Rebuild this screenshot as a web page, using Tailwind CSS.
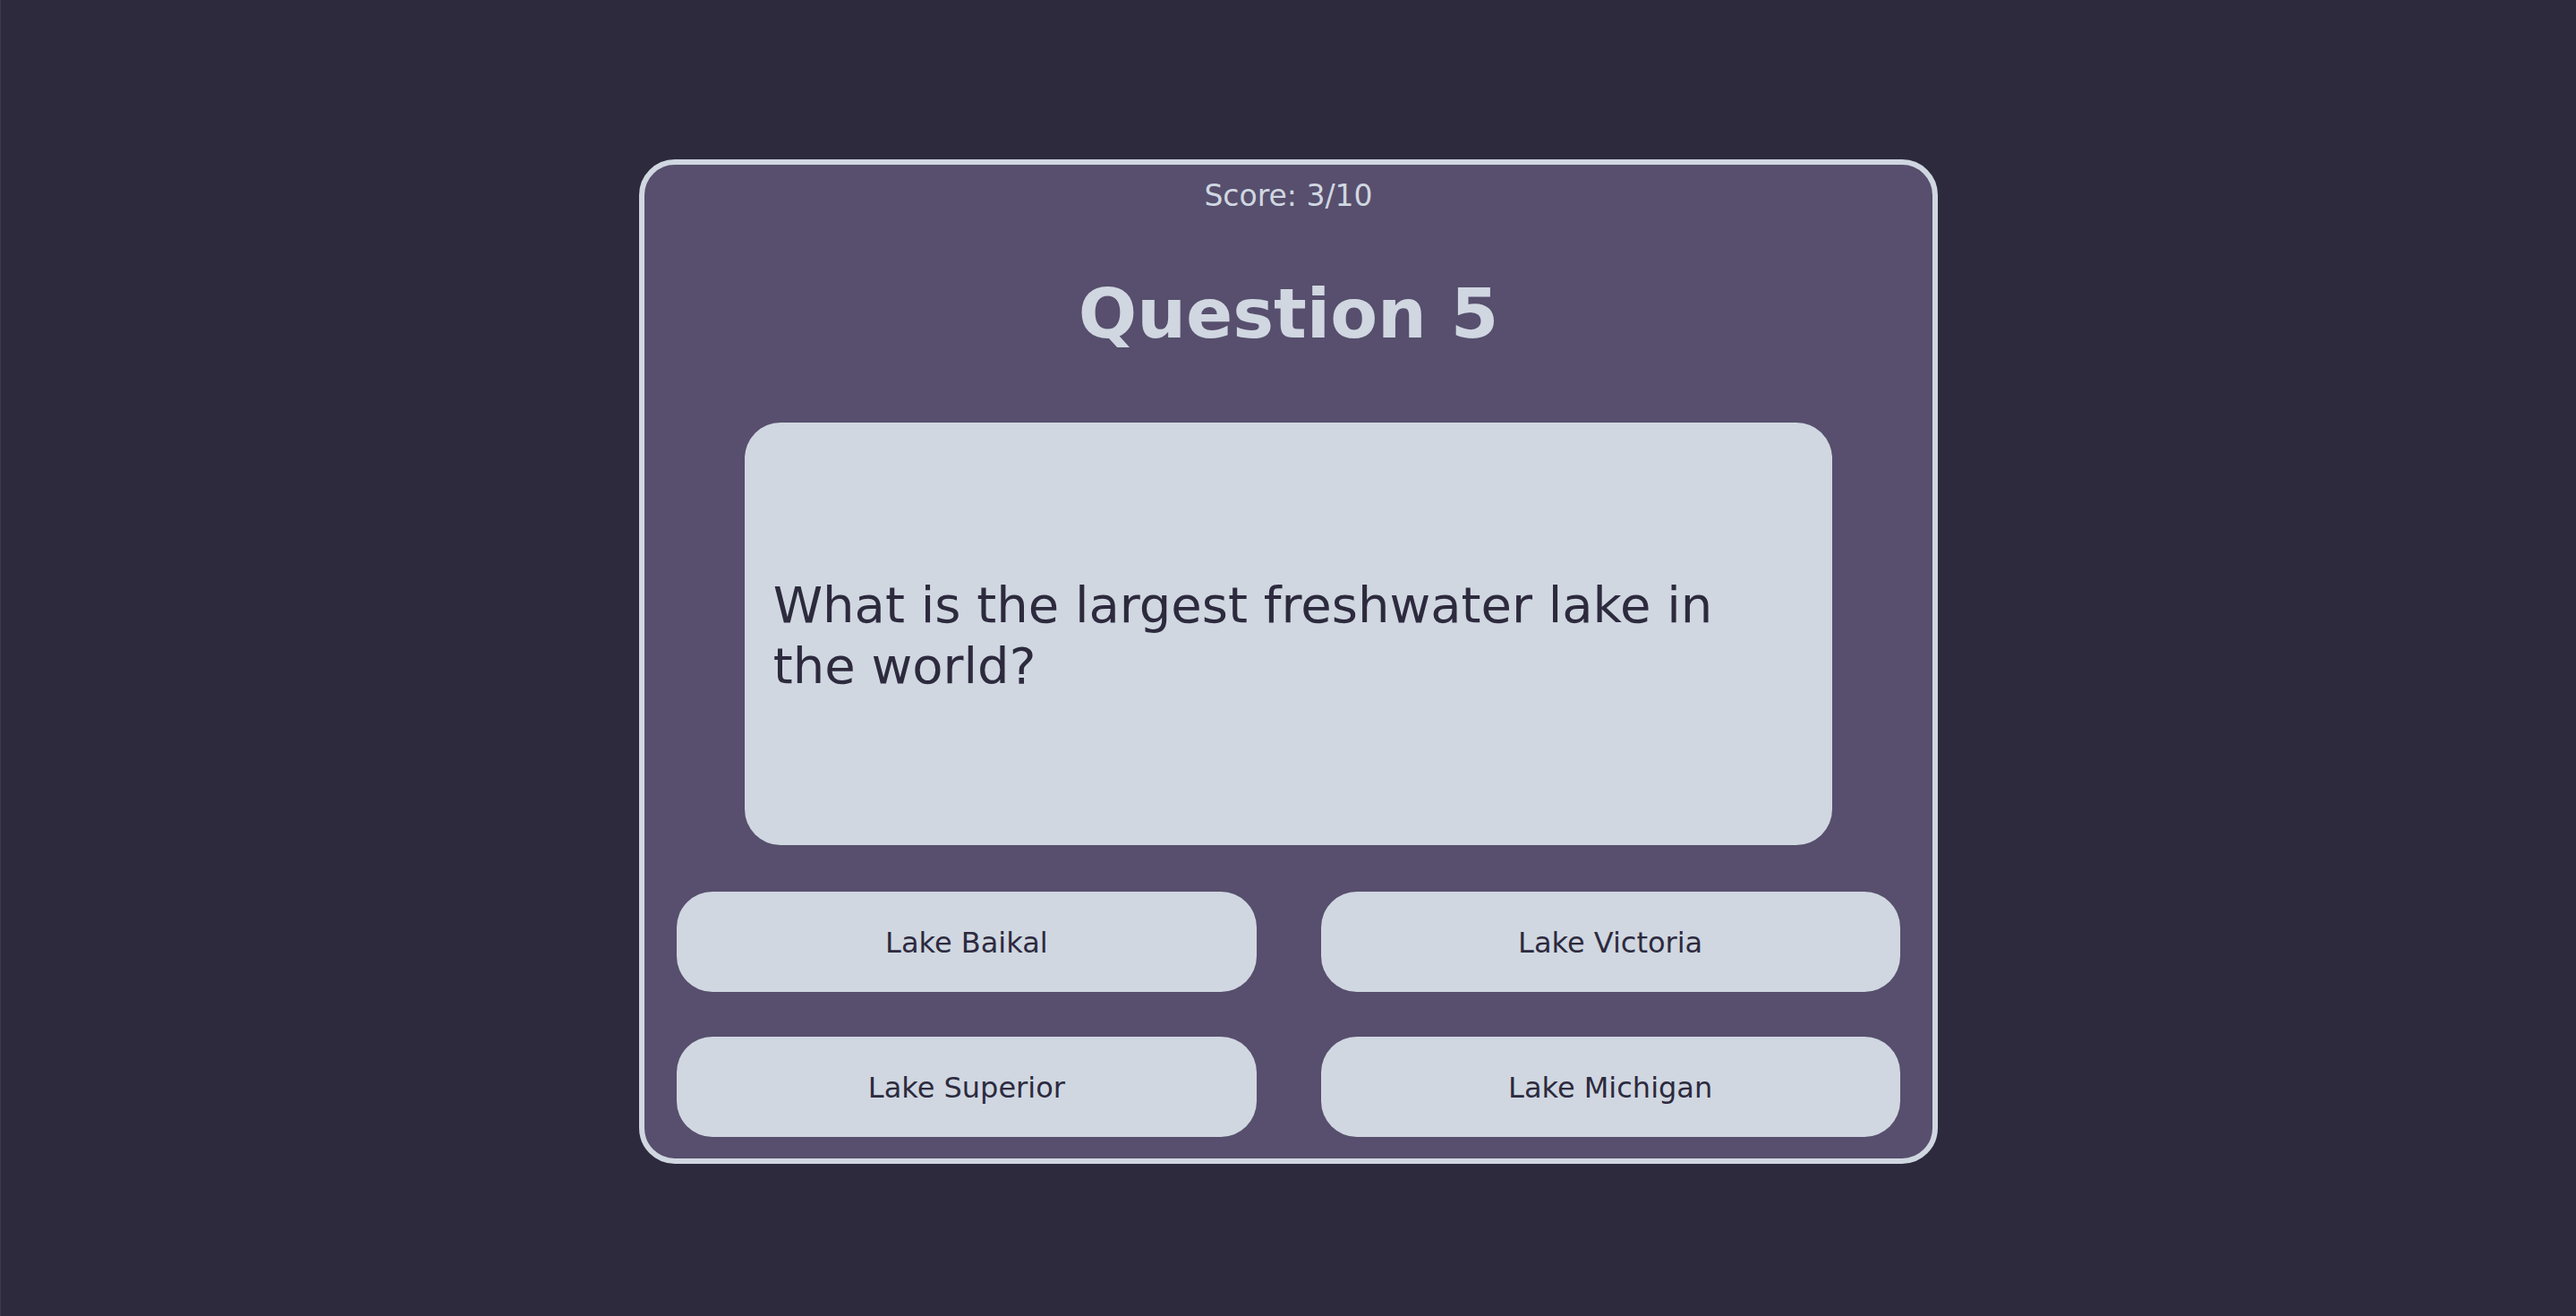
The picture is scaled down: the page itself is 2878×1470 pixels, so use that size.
<!DOCTYPE html>
<html lang="en">
<head>
<meta charset="utf-8">
<meta name="viewport" content="width=device-width, initial-scale=1">
<title>Quiz</title>
<script src="https://cdn.jsdelivr.net/npm/@tailwindcss/browser@4"></script>
</head>
<body class="flex min-h-screen flex-col items-center border-l border-[#3b374e] bg-[#2d2a3e] py-[178px] font-[Verdana,'DejaVu_Sans',sans-serif] text-[32px] text-[#2d2a3e]">
  <main class="box-content flex w-1/2 flex-col items-center rounded-[40px] border-[6px] border-[#d0d7e1] bg-[#574f6d] pt-4 pb-6">
    <p class="text-[33px] leading-[38px] text-[#d0d7e1]">Score: 3/10</p>
    <h1 class="mt-16 text-[77px] leading-[98px] font-bold text-[#d0d7e1]">Question 5</h1>
    <section class="mt-[72px] flex min-h-[472px] w-[84.5%] items-center rounded-[40px] bg-[#d0d7e1] px-8 pt-1">
      <p class="text-[56px] leading-[68px]">What is the largest freshwater lake in the world?</p>
    </section>
    <div class="mt-[52px] grid w-[95%] grid-cols-2 gap-x-[72px] gap-y-[50px]">
      <button type="button" class="h-28 rounded-[40px] bg-[#d0d7e1] pt-0.5">Lake Baikal</button>
      <button type="button" class="h-28 rounded-[40px] bg-[#d0d7e1] pt-0.5">Lake Victoria</button>
      <button type="button" class="h-28 rounded-[40px] bg-[#d0d7e1] pt-0.5">Lake Superior</button>
      <button type="button" class="h-28 rounded-[40px] bg-[#d0d7e1] pt-0.5">Lake Michigan</button>
    </div>
  </main>
</body>
</html>
